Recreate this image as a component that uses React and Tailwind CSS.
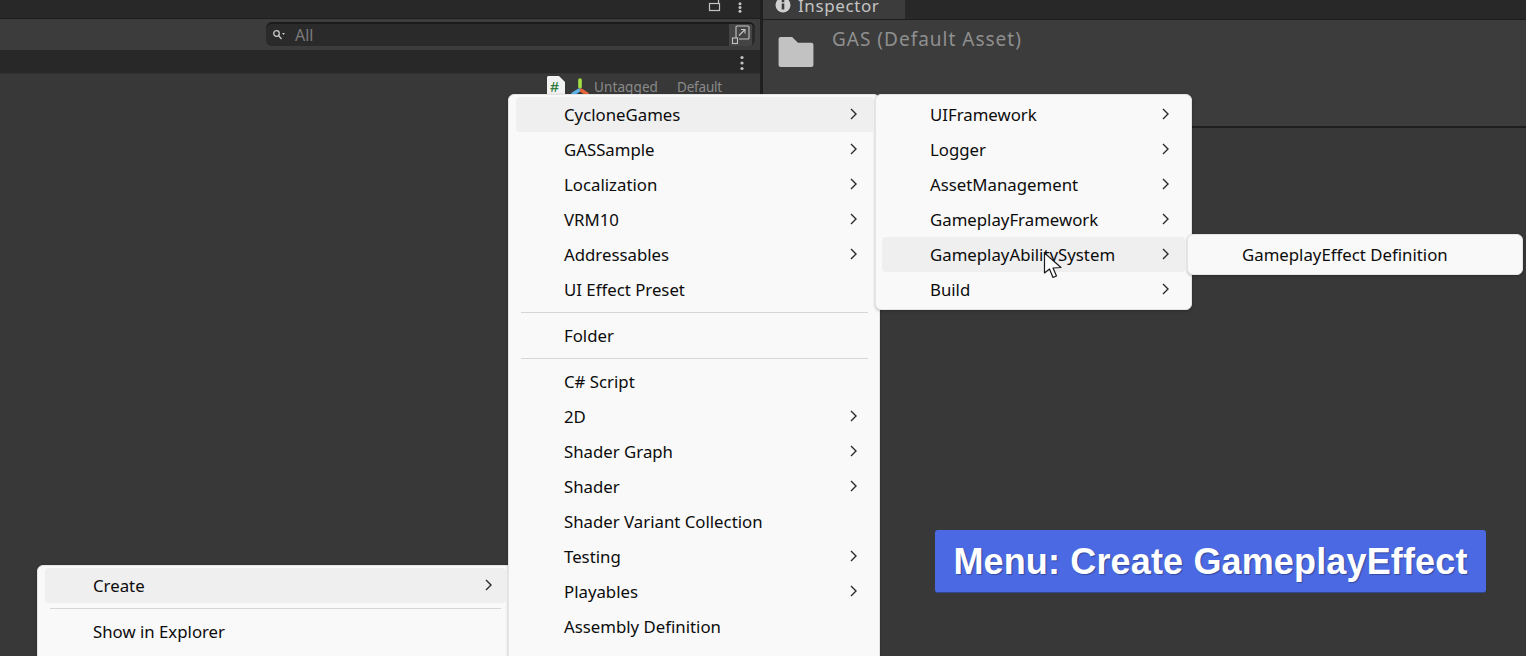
import React from "react";

function Chevron() {
  return (
    <svg width="9" height="14" viewBox="0 0 9 14" fill="none" stroke="#2a2a2a" strokeWidth="1.4" className="mb-[2px] shrink-0">
      <path d="M2 2 L7 7 L2 12" />
    </svg>
  );
}

function Row({ label, sub, active, pr = "pr-[15px]" }) {
  return (
    <div className={`flex h-[35px] shrink-0 items-center justify-between rounded-[4px] pl-[48px] text-[16.8px] text-[#0c0c0c] ${pr} ${active ? "bg-[#efefef]" : ""}`}>
      <span className="whitespace-nowrap pt-[2px] leading-none">{label}</span>
      {sub ? <Chevron /> : null}
    </div>
  );
}

function Sep() {
  return <div className="mx-[5px] my-[5px] h-px shrink-0 bg-[#d6d6d6]" />;
}

function Menu({ className, children }) {
  return (
    <div className={`absolute flex flex-col overflow-hidden rounded-[6px] border border-[#e4e4e4] bg-[#f9f9f9] pt-[2px] shadow-[0_1px_3px_rgba(0,0,0,0.25)] ${className}`}>
      {children}
    </div>
  );
}

function TagIcon() {
  return (
    <svg width="18" height="24" viewBox="0 0 18 24" className="shrink-0">
      <path d="M1 0 H12 L18 6 V24 H0 V1 Z" fill="#f2f2f2" />
      <text x="3" y="16" fontSize="15" fontWeight="700" fill="#2f7a3c" fontFamily="'Liberation Mono', monospace">#</text>
    </svg>
  );
}

function ManIcon() {
  return (
    <svg width="22" height="24" viewBox="0 0 22 24" className="ml-[5px] shrink-0">
      <path d="M10 4 V11" stroke="#a5e043" strokeWidth="3.6" strokeLinecap="round" />
      <path d="M10 12 V14" stroke="#8a8a8a" strokeWidth="1.4" />
      <path d="M3 18 L8.5 14.5" stroke="#5cb3ea" strokeWidth="3.6" strokeLinecap="round" />
      <path d="M17 18 L11.5 14.5" stroke="#e8653a" strokeWidth="3.6" strokeLinecap="round" />
    </svg>
  );
}

function Dots({ tall }) {
  return tall ? (
    <svg width="4" height="16" viewBox="0 0 4 16" className="mt-[2px] shrink-0">
      <circle cx="2" cy="2.5" r="1.6" fill="#c4c4c4" />
      <circle cx="2" cy="8" r="1.6" fill="#c4c4c4" />
      <circle cx="2" cy="13.5" r="1.6" fill="#c4c4c4" />
    </svg>
  ) : (
    <svg width="4" height="11" viewBox="0 0 4 11" className="shrink-0">
      <circle cx="2" cy="1.8" r="1.5" fill="#c4c4c4" />
      <circle cx="2" cy="5.5" r="1.5" fill="#c4c4c4" />
      <circle cx="2" cy="9.2" r="1.5" fill="#c4c4c4" />
    </svg>
  );
}

export default function App() {
  return (
    <div className="relative flex h-[656px] w-[1526px] overflow-hidden bg-[#383838] font-['Noto_Sans','Open_Sans',sans-serif]">
      {/* Left pane */}
      <div className="flex w-[760px] shrink-0 flex-col">
        <div className="flex h-[18px] shrink-0 items-start justify-end gap-[16px] bg-[#282828] pt-[2px] pr-[18px]">
          <svg width="14" height="14" viewBox="0 0 14 14" fill="none" stroke="#c4c4c4" strokeWidth="1.2" className="-mt-[2px] shrink-0">
            <rect x="1.5" y="3.5" width="10" height="7" />
            <path d="M10.5 3.5 V0" />
          </svg>
          <Dots />
        </div>
        <div className="h-px shrink-0 bg-[#1e1e1e]" />
        <div className="flex h-[31px] shrink-0 items-start justify-end bg-[#3c3c3c] pt-[3px] pr-[5px]">
          <div className="flex h-[24px] w-[489px] items-center overflow-hidden rounded-[6px] border-t-2 border-t-[#1a1a1a] bg-[#2a2a2a] pr-[3px] pl-[6px]">
            <svg width="14" height="12" viewBox="0 0 14 12" fill="none" stroke="#c8c8c8" strokeWidth="1.3" className="shrink-0">
              <circle cx="4.5" cy="4.5" r="2.8" />
              <path d="M6.5 6.5 L9.5 10" />
              <path d="M10 4 H13 L11.5 6 Z" fill="#c8c8c8" stroke="none" />
            </svg>
            <span className="ml-[9px] text-[16px] leading-none text-[#7a7a7a]">All</span>
            <div className="ml-auto flex h-full w-[23px] shrink-0 items-center justify-center bg-[#444444]">
              <svg width="20" height="20" viewBox="0 0 20 20" fill="none" stroke="#c4c4c4" strokeWidth="1.1">
                <path d="M5 13 V2 Q5 1 6 1 H17 Q18 1 18 2 V13 Q18 14 17 14 H8" />
                <rect x="1.5" y="13" width="5" height="5.5" />
                <path d="M8 10.5 L14 4.5 M10 4.5 H14 V8.5" />
              </svg>
            </div>
          </div>
        </div>
        <div className="flex h-[23px] shrink-0 items-center justify-end bg-[#282828] pr-[16px]">
          <Dots tall />
        </div>
        <div className="relative flex-1 border-t border-[#323232] bg-[#383838]">
          <div className="flex items-start justify-end pt-[2px] pr-[38px]">
            <TagIcon />
            <ManIcon />
            <span className="mt-[1px] ml-[2px] text-[13.5px] leading-[20px] tracking-[0.1px] text-[#8a8a8a]">Untagged</span>
            <span className="mt-[1px] ml-[19px] text-[13.5px] leading-[20px] tracking-[-0.2px] text-[#8a8a8a]">Default</span>
          </div>
        </div>
      </div>

      {/* Pane gap */}
      <div className="w-[3px] shrink-0 bg-[#1f1f1f]" />

      {/* Right pane */}
      <div className="flex flex-1 flex-col">
        <div className="flex h-[19px] shrink-0 bg-[#282828]">
          <div className="flex w-[142px] items-end gap-[7px] overflow-hidden bg-[#3c3c3c] pl-[12px]">
            <svg width="16" height="16" viewBox="0 0 16 16" className="mb-[6px] shrink-0">
              <circle cx="8" cy="8" r="7.5" fill="#d0d0d0" />
              <rect x="6.7" y="6.5" width="2.6" height="6" fill="#3c3c3c" />
              <rect x="6.7" y="2.8" width="2.6" height="2.4" fill="#3c3c3c" />
            </svg>
            <span className="mb-[2px] text-[17px] leading-[22px] tracking-[0.6px] text-[#c4c4c4]">Inspector</span>
          </div>
        </div>
        <div className="h-px shrink-0 bg-[#1e1e1e]" />
        <div className="flex h-[108px] shrink-0 border-b-2 border-b-[#1e1e1e] bg-[#3c3c3c]">
          <svg width="36" height="30" viewBox="0 0 36 31" className="mt-[17px] ml-[15px] shrink-0">
            <path d="M2 0 H14 L20 6 H34 Q36 6 36 8 V29 Q36 31 34 31 H2 Q0 31 0 29 V2 Q0 0 2 0 Z" fill="#c2c2c2" />
          </svg>
          <span className="mt-[6px] ml-[18px] text-[19px] leading-[26px] tracking-[1px] text-[#8f8f8f]">GAS (Default Asset)</span>
        </div>
        <div className="flex-1 bg-[#383838]" />
      </div>

      {/* Bottom-left context menu */}
      <Menu className="top-[565px] left-[37px] h-[110px] w-[477px] px-[7px]">
        <Row label="Create" sub active pr="pr-[13px]" />
        <Sep />
        <Row label="Show in Explorer" />
      </Menu>

      {/* Main create menu */}
      <Menu className="top-[94px] left-[508px] h-[600px] w-[372px] pr-[6px] pl-[7px]">
        <Row label="CycloneGames" sub active />
        <Row label="GASSample" sub />
        <Row label="Localization" sub />
        <Row label="VRM10" sub />
        <Row label="Addressables" sub />
        <Row label="UI Effect Preset" />
        <Sep />
        <Row label="Folder" />
        <Sep />
        <Row label="C# Script" />
        <Row label="2D" sub />
        <Row label="Shader Graph" sub />
        <Row label="Shader" sub />
        <Row label="Shader Variant Collection" />
        <Row label="Testing" sub />
        <Row label="Playables" sub />
        <Row label="Assembly Definition" />
        <Row label="Assembly Definition Reference" />
      </Menu>

      {/* Second level */}
      <Menu className="top-[94px] left-[875px] h-[216px] w-[317px] px-[6px]">
        <Row label="UIFramework" sub />
        <Row label="Logger" sub />
        <Row label="AssetManagement" sub />
        <Row label="GameplayFramework" sub />
        <Row label="GameplayAbilitySystem" sub active />
        <Row label="Build" sub />
      </Menu>

      {/* Third level */}
      <Menu className="top-[234px] left-[1187px] h-[41px] w-[336px] px-[6px]">
        <Row label="GameplayEffect Definition" />
      </Menu>

      {/* Cursor */}
      <svg width="20" height="28" viewBox="0 0 20 28" className="absolute top-[252px] left-[1043px]">
        <path d="M1.5 1 V21 L6.5 17 L10 25.5 L13.5 24 L10 16 L18 15.5 Z" fill="#ffffff" stroke="#1a1a1a" strokeWidth="1.2" strokeLinejoin="round" />
      </svg>

      {/* Caption */}
      <div className="absolute top-[530px] left-[935px] flex h-[63px] w-[551px] items-center justify-center rounded-[3px] border-b border-b-[#34468f] bg-[#4a69e2] pt-[1px] font-['Liberation_Sans',sans-serif] text-[36px] font-bold tracking-[0.15px] text-white [text-shadow:1px_1px_1px_rgba(0,0,0,0.3)]">
        Menu: Create GameplayEffect
      </div>
    </div>
  );
}
